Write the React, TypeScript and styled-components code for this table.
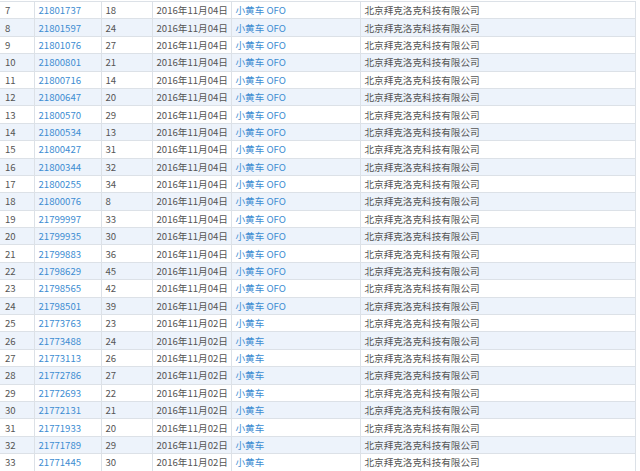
import React from "react";
import styled, { createGlobalStyle } from "styled-components";

const Global = createGlobalStyle`
  html, body { margin: 0; padding: 0; background: #ffffff; }
  body { padding-top: 1px; font-family: "Noto Sans CJK SC", "Noto Sans", sans-serif; }
`;

const Table = styled.table`
  border-collapse: collapse;
  table-layout: fixed;
  width: 635px;
  font-size: 9.6px;
  color: #555555;
`;

const Col = styled.col<{ $w: number }>`
  width: ${(p) => p.$w}px;
`;

const Row = styled.tr<{ $alt: boolean }>`
  height: 17.4px;
  background: ${(p) => (p.$alt ? "#edf3fb" : "#ffffff")};
`;

const Cell = styled.td<{ $link?: boolean }>`
  border: 1px solid #dce1e7;
  padding: 0 0 0 4px;
  height: 16.4px;
  line-height: 16px;
  white-space: nowrap;
  overflow: hidden;
  color: ${(p) => (p.$link ? "#3d8dd2" : "#555555")};
  &:first-child { border-left: none; padding-left: 5px; }
`;

type R = [number, string, number, string, boolean];

const rows: R[] = [
  [7, "21801737", 18, "04", true],
  [8, "21801597", 24, "04", true],
  [9, "21801076", 27, "04", true],
  [10, "21800801", 21, "04", true],
  [11, "21800716", 14, "04", true],
  [12, "21800647", 20, "04", true],
  [13, "21800570", 29, "04", true],
  [14, "21800534", 13, "04", true],
  [15, "21800427", 31, "04", true],
  [16, "21800344", 32, "04", true],
  [17, "21800255", 34, "04", true],
  [18, "21800076", 8, "04", true],
  [19, "21799997", 33, "04", true],
  [20, "21799935", 30, "04", true],
  [21, "21799883", 36, "04", true],
  [22, "21798629", 45, "04", true],
  [23, "21798565", 42, "04", true],
  [24, "21798501", 39, "04", true],
  [25, "21773763", 23, "02", false],
  [26, "21773488", 24, "02", false],
  [27, "21773113", 26, "02", false],
  [28, "21772786", 27, "02", false],
  [29, "21772693", 22, "02", false],
  [30, "21772131", 21, "02", false],
  [31, "21771933", 20, "02", false],
  [32, "21771789", 29, "02", false],
  [33, "21771445", 30, "02", false],
];

const widths = [34, 67, 51, 79, 129, 275];

export default function App() {
  return (
    <>
      <Global />
      <Table>
        <colgroup>
          {widths.map((w, i) => (
            <Col key={i} $w={w} />
          ))}
        </colgroup>
        <tbody>
          {rows.map(([n, id, c, d, ofo]) => (
            <Row key={n} $alt={n % 2 === 0}>
              <Cell>{n}</Cell>
              <Cell $link>{id}</Cell>
              <Cell>{c}</Cell>
              <Cell>{`2016年11月${d}日`}</Cell>
              <Cell $link>{ofo ? "小黄车 OFO" : "小黄车"}</Cell>
              <Cell>北京拜克洛克科技有限公司</Cell>
            </Row>
          ))}
        </tbody>
      </Table>
    </>
  );
}
